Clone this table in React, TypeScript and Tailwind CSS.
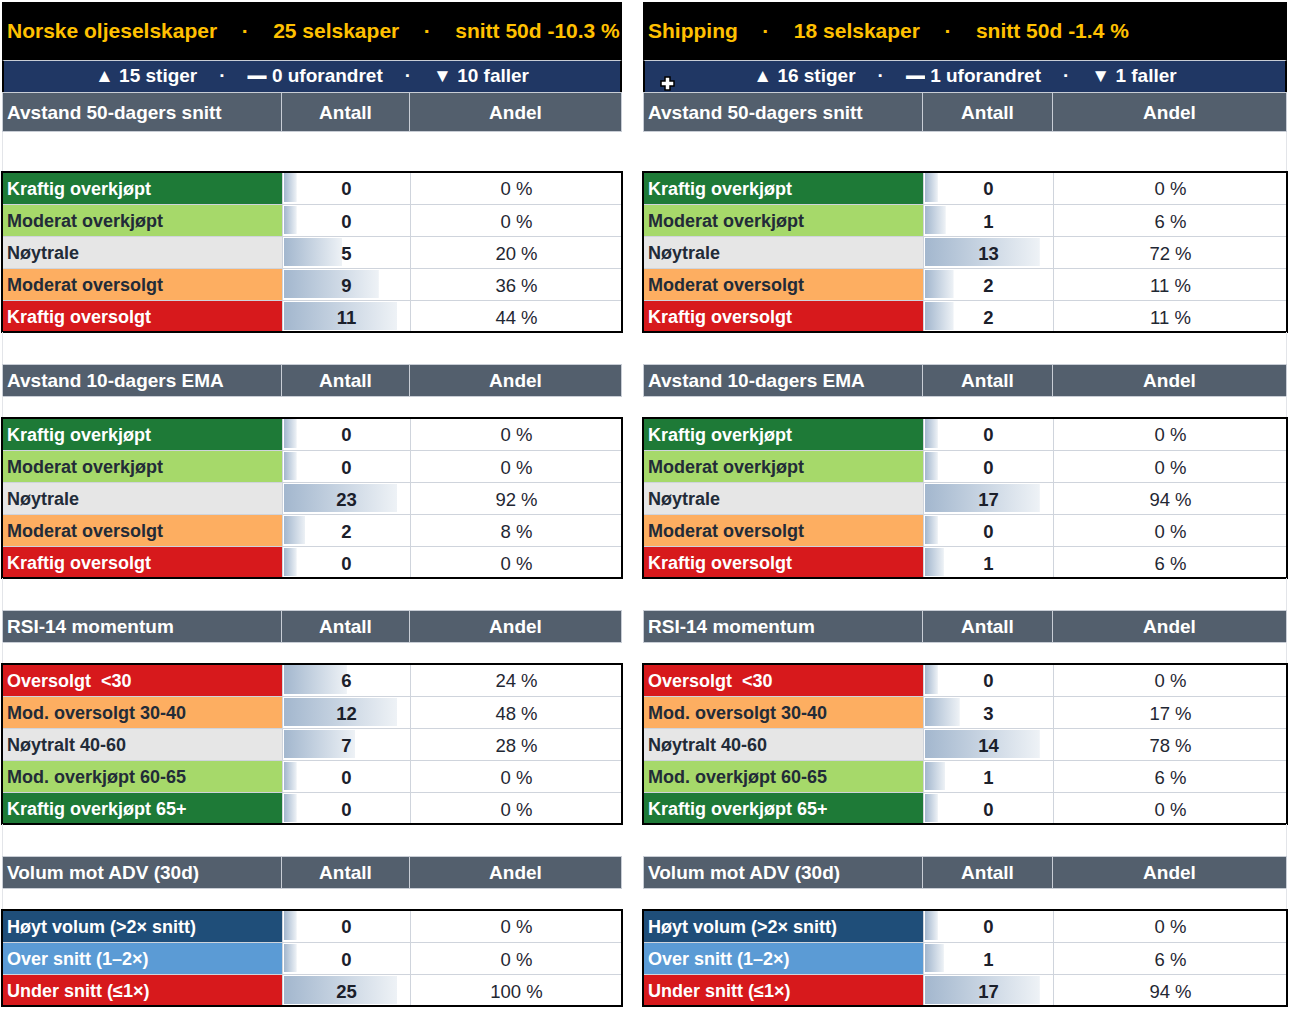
import React from "react";

type Tone = "strongBuy" | "buy" | "neutral" | "sell" | "strongSell" | "volHigh" | "volOver";

interface Row {
    label: string;
    tone: Tone;
    n: number;
    pct: number;
}

interface Table {
    title: string;
    rows: Row[];
}

interface Panel {
    name: string;
    count: number;
    avg: string;
    up: number;
    flat: number;
    down: number;
    cols: string;
    edge: string;
    tables: Table[];
}

const TONE: Record<Tone, string> = {
    strongBuy: "bg-[#1e7a37] text-white",
    buy: "bg-[#a6d96a] text-[#222b38]",
    neutral: "bg-[#e6e6e6] text-[#222b38]",
    sell: "bg-[#fdae61] text-[#222b38]",
    strongSell: "bg-[#d7191c] text-white",
    volHigh: "bg-[#1f4e79] text-white",
    volOver: "bg-[#5b9bd5] text-white",
};

const trend = (v: number[], p: number[]): Row[] => {
    const labels = ["Kraftig overkjøpt", "Moderat overkjøpt", "Nøytrale", "Moderat oversolgt", "Kraftig oversolgt"];
    const tones: Tone[] = ["strongBuy", "buy", "neutral", "sell", "strongSell"];
    return labels.map((label, i) => ({ label, tone: tones[i], n: v[i], pct: p[i] }));
};

const rsi = (v: number[], p: number[]): Row[] => {
    const labels = ["Oversolgt  <30", "Mod. oversolgt 30-40", "Nøytralt 40-60", "Mod. overkjøpt 60-65", "Kraftig overkjøpt 65+"];
    const tones: Tone[] = ["strongSell", "sell", "neutral", "buy", "strongBuy"];
    return labels.map((label, i) => ({ label, tone: tones[i], n: v[i], pct: p[i] }));
};

const volume = (v: number[], p: number[]): Row[] => {
    const labels = ["Høyt volum (>2× snitt)", "Over snitt (1–2×)", "Under snitt (≤1×)"];
    const tones: Tone[] = ["volHigh", "volOver", "strongSell"];
    return labels.map((label, i) => ({ label, tone: tones[i], n: v[i], pct: p[i] }));
};

const PANELS: Panel[] = [
    {
        name: "Norske oljeselskaper",
        count: 25,
        avg: "-10.3 %",
        up: 15,
        flat: 0,
        down: 10,
        cols: "w-[620px]",
        edge: "border-l",
        tables: [
            { title: "Avstand 50-dagers snitt", rows: trend([0, 0, 5, 9, 11], [0, 0, 20, 36, 44]) },
            { title: "Avstand 10-dagers EMA", rows: trend([0, 0, 23, 2, 0], [0, 0, 92, 8, 0]) },
            { title: "RSI-14 momentum", rows: rsi([6, 12, 7, 0, 0], [24, 48, 28, 0, 0]) },
            { title: "Volum mot ADV (30d)", rows: volume([0, 0, 25], [0, 0, 100]) },
        ],
    },
    {
        name: "Shipping",
        count: 18,
        avg: "-1.4 %",
        up: 16,
        flat: 1,
        down: 1,
        cols: "w-[644px]",
        edge: "border-r",
        tables: [
            { title: "Avstand 50-dagers snitt", rows: trend([0, 1, 13, 2, 2], [0, 6, 72, 11, 11]) },
            { title: "Avstand 10-dagers EMA", rows: trend([0, 0, 17, 0, 1], [0, 0, 94, 0, 6]) },
            { title: "RSI-14 momentum", rows: rsi([0, 3, 14, 1, 0], [0, 17, 78, 6, 0]) },
            { title: "Volum mot ADV (30d)", rows: volume([0, 1, 17], [0, 6, 94]) },
        ],
    },
];

function Blank({ h, edge }: { h: string; edge: string }) {
    return <div className={`${h} ${edge} border-[#e3e5e9]`} />;
}

function Grid({ wide, className, children }: { wide: boolean; className: string; children: React.ReactNode }) {
    return (
        <div className={`grid ${wide ? "grid-cols-[280px_130px_234px]" : "grid-cols-[280px_128px_212px]"} ${className}`}>
            {children}
        </div>
    );
}

function StatTable({ table, wide, first, edge }: { table: Table; wide: boolean; first: boolean; edge: string }) {
    const max = Math.max(...table.rows.map(r => r.n), 1);
    const pad = first ? "pt-[3px]" : "pt-[2px]";

    return (
        <div className="flex flex-col">
            <Grid wide={wide} className={`${first ? "h-[40px]" : "h-8"} bg-[#535f6d] text-white font-bold text-[19px]`}>
                <div className={`flex items-center pl-1 ${pad} border border-[#c8cdd5]`}>{table.title}</div>
                <div className={`flex items-center justify-center ${pad} border-y border-r border-[#c8cdd5]`}>Antall</div>
                <div className={`flex items-center justify-center ${pad} border-y border-r border-[#c8cdd5]`}>Andel</div>
            </Grid>
            <Blank h={first ? "h-[40px]" : "h-[22px]"} edge={edge} />
            <div className="flex flex-col outline-2 outline-black outline-offset-[-1px]">
                {table.rows.map((row, i) => (
                    <Grid key={i} wide={wide} className={`h-8 ${i > 0 ? "border-t border-[#cfd4dc]" : ""}`}>
                        <div className={`flex items-center pl-[5px] pt-[2px] font-bold text-[18px] whitespace-pre ${TONE[row.tone]}`}>
                            {row.label}
                        </div>
                        <div
                            className="flex items-center justify-center pt-[2px] border-l border-[#cfd4dc] font-bold text-[18.5px] text-[#1b202b] bg-linear-to-r from-[#a3b7ce] to-[#eef2f6] bg-no-repeat bg-position-[1px_1px]"
                            style={{ backgroundSize: `${10 + (79 * row.n) / max}% calc(100% - 3px)` }}
                        >
                            {row.n}
                        </div>
                        <div className="flex items-center justify-center pt-[2px] border-l border-[#cfd4dc] text-[18.5px] text-[#1f2733]">
                            {row.pct} %
                        </div>
                    </Grid>
                ))}
            </div>
        </div>
    );
}

function PanelView({ panel, wide }: { panel: Panel; wide: boolean }) {
    return (
        <div className={`flex flex-col ${panel.cols}`}>
            <div className="h-[58px] bg-black flex items-center gap-[24.5px] pl-[5px] overflow-hidden whitespace-nowrap text-[#ffc000] font-bold text-[21px]">
                <span>{panel.name}</span>
                <span>·</span>
                <span>{panel.count} selskaper</span>
                <span>·</span>
                <span>snitt 50d {panel.avg}</span>
            </div>
            <div className="h-8 bg-[#203764] border-x-2 border-x-black border-t border-t-[#c8cdd5] flex items-center justify-center gap-[22px] text-white font-bold text-[19px]">
                <span>▲ {panel.up} stiger</span>
                <span>·</span>
                <span>
                    <span className="inline-block scale-y-[1.8]">—</span> {panel.flat} uforandret
                </span>
                <span>·</span>
                <span>▼ {panel.down} faller</span>
            </div>
            {panel.tables.map((t, i) => (
                <React.Fragment key={t.title}>
                    {i > 0 && <Blank h="h-8" edge={panel.edge} />}
                    <StatTable table={t} wide={wide} first={i === 0} edge={panel.edge} />
                </React.Fragment>
            ))}
        </div>
    );
}

export default function App() {
    return (
        <div className="relative w-[1292px] h-[1012px] bg-white pt-[2px] pl-[2px] flex gap-[21px] font-['Liberation_Sans',Arial,sans-serif] overflow-hidden">
            <PanelView panel={PANELS[0]} wide={false} />
            <PanelView panel={PANELS[1]} wide={true} />
            {/* mouse cursor captured in the screenshot */}
            <svg className="absolute left-[660px] top-[76px]" width="15" height="15" viewBox="0 0 15 15">
                <path d="M5 1h5v4h4v5h-4v4H5v-4H1V5h4z" fill="#fff" stroke="#000" strokeWidth="1.5" />
            </svg>
        </div>
    );
}
